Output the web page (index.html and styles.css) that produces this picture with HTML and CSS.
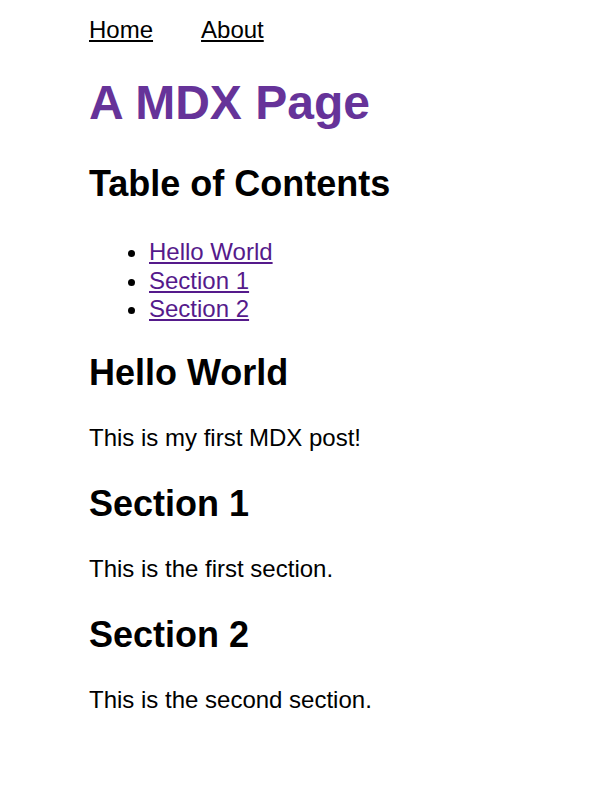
FILE: index.html
```html
<!DOCTYPE html>
<html lang="en">
<head>
<meta charset="utf-8">
<title>A MDX Page</title>
<link rel="stylesheet" href="styles.css">
</head>
<body>
<div class="page">
  <nav class="nav">
    <a href="#" class="nav-link">Home</a>
    <a href="#" class="nav-link">About</a>
  </nav>
  <main>
    <h1 class="title">A MDX Page</h1>
    <h2 class="heading">Table of Contents</h2>
    <ul class="toc">
      <li><a href="#hello-world" class="toc-link">Hello World</a></li>
      <li><a href="#section-1" class="toc-link">Section 1</a></li>
      <li><a href="#section-2" class="toc-link">Section 2</a></li>
    </ul>
    <h2 class="heading" id="hello-world">Hello World</h2>
    <p class="text">This is my first MDX post!</p>
    <h2 class="heading" id="section-1">Section 1</h2>
    <p class="text">This is the first section.</p>
    <h2 class="heading" id="section-2">Section 2</h2>
    <p class="text">This is the second section.</p>
  </main>
</div>
</body>
</html>
```
FILE: styles.css
```css
html, body {
  margin: 0;
  padding: 0;
  background: #fff;
}
body {
  font-family: "Liberation Sans", Arial, sans-serif;
  font-size: 24px;
  line-height: 1.2;
  color: #000;
}
.page {
  padding: 16px 20px 40px 89px;
}
.nav {
  display: flex;
  gap: 48px;
}
.nav-link {
  color: #000;
  text-decoration: underline;
}
.title {
  color: #663399;
  font-size: 48px;
  font-weight: bold;
  margin: 30px 0 32px;
  line-height: 1.15;
}
.heading {
  font-size: 36px;
  font-weight: bold;
  margin: 29px 0 30px;
}
.toc {
  margin: 33px 0 0;
  padding-left: 60px;
  list-style: disc;
}
.toc + .heading {
  margin-top: 27px;
}
.toc li {
  line-height: 28.5px;
}
.toc-link {
  color: #551a8b;
}
.text {
  margin: 24px 0;
}
```
